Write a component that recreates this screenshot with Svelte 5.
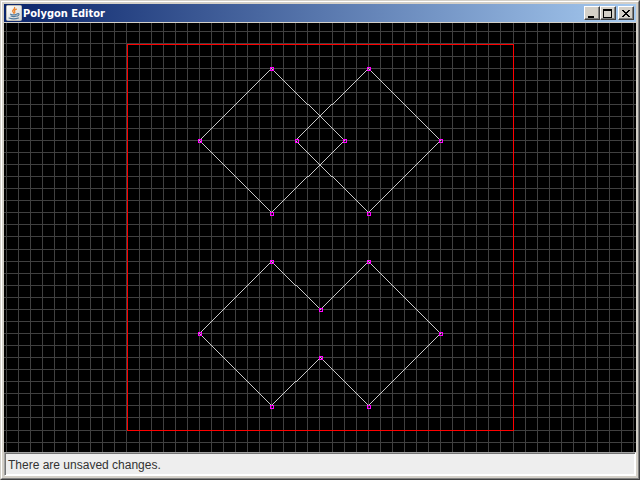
<script>
  /**
   * Polygon editor window: title bar, drawing canvas with a grid,
   * and a status bar along the bottom.
   */
  const CELL = 12.063;
  const bounds = { x: 123, y: 21, size: 386 };

  const polygons = [
    [[267, 45], [340, 117], [267, 189], [195, 117]],
    [[364, 45], [436, 117], [364, 189], [291, 117]],
    [[267, 238], [316, 286], [364, 238], [436, 310], [364, 382], [316, 334], [267, 382], [195, 310]]
  ];

  const handles = [
    [267, 45], [340, 117], [267, 190], [195, 117],
    [364, 45], [436, 117], [364, 190], [292, 117],
    [267, 238], [316, 286], [364, 238], [436, 310],
    [364, 383], [316, 334], [267, 383], [195, 310]
  ];

  let width = $state(632);
  let height = $state(429);

  // Grid lines round down, just short of the bounds
  function gridLines(origin, length) {
    const start = origin - 0.01;
    const lines = [];
    for (let k = -Math.floor(start / CELL); start + k * CELL < length; k++) {
      lines.push(Math.floor(start + k * CELL));
    }
    return lines;
  }

  let columns = $derived(gridLines(bounds.x, width));
  let rows = $derived(gridLines(bounds.y, height));

  // One square per step, so edges stay hard and one pixel wide
  function edgePath([x0, y0], [x1, y1]) {
    const steps = Math.max(Math.abs(x1 - x0), Math.abs(y1 - y0));
    let d = '';
    for (let i = 0; i <= steps; i++) {
      const x = Math.round(x0 + ((x1 - x0) * i) / steps);
      const y = Math.round(y0 + ((y1 - y0) * i) / steps);
      d += `M${x} ${y}h1v1h-1z`;
    }
    return d;
  }

  function outline(polygon) {
    return polygon.map((p, i) => edgePath(p, polygon[(i + 1) % polygon.length])).join('');
  }
</script>

<div class="window">
  <div class="frame">
    <header class="titlebar">
      <svg class="logo" viewBox="0 0 16 16" aria-hidden="true">
        <defs>
          <linearGradient id="tile" x1="0" y1="0" x2="1" y2="1">
            <stop offset="0" stop-color="#fff" />
            <stop offset="1" stop-color="#d5d5d2" />
          </linearGradient>
        </defs>
        <rect x="0.5" y="0.5" width="15" height="15" rx="1" fill="url(#tile)" stroke="#bdbbb4" />
        <g fill="none" stroke-linecap="round">
          <path d="M8.6 2.5c.8 1.800-2.400 2.300-1.900 3.900.2.700.9.900 1 1.700M10.400 4.200C8.500 5 8 5.700 8.700 6.600c.4.600.2 1-.3 1.500" stroke="#ed852f" stroke-width="1.300" />
          <path d="M4.500 9.200c1.500.7 4.500.7 6 0M5 11c1.500.6 3.800.6 5.200 0M3 13c2.500.9 7 .9 9.500 0M11.300 8.800c2.500-.6 2.200 1.800-.3 2.300" stroke="#527a9c" stroke-width="1.200" />
        </g>
      </svg>
      <h1>Polygon Editor</h1>
      <div class="controls">
        <button type="button" aria-label="Minimize">
          <svg viewBox="0 0 12 10"><path d="M3 8h6v2H3z" /></svg>
        </button>
        <button type="button" aria-label="Maximize">
          <svg viewBox="0 0 12 10"><path d="M2 1h9v9H2zM3 3v6h7V3z" fill-rule="evenodd" /></svg>
        </button>
        <button type="button" class="close" aria-label="Close">
          <svg viewBox="0 0 12 10">
            <path d="M3 2h2v1h1v1h2V3h1V2h2v1h-1v1H9v1H8v1h1v1h1v1h1v1H9V8H8V7H6v1H5v1H3V8h1V7h1V6h1V5H5V4H4V3H3z" />
          </svg>
        </button>
      </div>
    </header>

    <main class="canvas" bind:clientWidth={width} bind:clientHeight={height}>
      <svg class="drawing" role="img" aria-label="Polygon canvas">
        <g class="grid">
          {#each columns as x (x)}
            <rect {x} y="0" width="1" height="100%" />
          {/each}
          {#each rows as y (y)}
            <rect x="0" {y} width="100%" height="1" />
          {/each}
        </g>
        <rect class="bounds" x={bounds.x + 0.5} y={bounds.y + 0.5} width={bounds.size} height={bounds.size} />
        {#each polygons as polygon}
          <path class="outline" d={outline(polygon)} />
        {/each}
        {#each handles as [x, y]}
          <rect class="handle" x={x - 0.5} y={y - 0.5} width="3" height="3" />
        {/each}
      </svg>
    </main>

    <footer class="status" role="status">There are unsaved changes.</footer>
  </div>
</div>

<style>
  :global(body) {
    margin: 0;
  }

  .window {
    box-sizing: border-box;
    height: 100vh;
    border: 1px solid;
    border-color: #d4d0c8 #404040 #404040 #d4d0c8;
    background: #d4d0c8;
  }

  .frame {
    box-sizing: border-box;
    height: 100%;
    display: flex;
    flex-direction: column;
    padding: 2px;
    border: 1px solid;
    border-color: #fff #808080 #808080 #fff;
  }

  .titlebar {
    display: flex;
    align-items: center;
    height: 18px;
    margin-bottom: 1px;
    padding: 0 2px;
    background: linear-gradient(to right, #0a246a, #a6caf0);
  }

  .logo {
    width: 16px;
    height: 16px;
  }

  h1 {
    flex: 1;
    margin: 0;
    padding: 2px 0 0 1px;
    font: bold 11px/16px "DejaVu Sans Condensed", "DejaVu Sans", sans-serif;
    color: #fff;
  }

  .controls {
    display: flex;
  }

  button {
    box-sizing: border-box;
    width: 16px;
    height: 14px;
    padding: 0;
    border: 1px solid;
    border-color: #fff #404040 #404040 #fff;
    background: #d4d0c8;
    box-shadow: inset -1px -1px #808080;
  }

  button svg {
    display: block;
    width: 12px;
    height: 10px;
    shape-rendering: crispEdges;
  }

  .close {
    margin-left: 2px;
  }

  .canvas {
    flex: 1;
    min-height: 0;
    overflow: hidden;
    background: #000;
  }

  .drawing {
    display: block;
    width: 100%;
    height: 100%;
    shape-rendering: crispEdges;
  }

  .grid {
    fill: #404040;
  }

  .bounds {
    fill: none;
    stroke: #f00;
  }

  .outline {
    fill: #c8c8c8;
  }

  .handle {
    fill: none;
    stroke: #f0f;
  }

  .status {
    box-sizing: border-box;
    height: 24px;
    padding: 1px 3px 0;
    border: 1px solid;
    border-color: #a3a3a3 #fff #fff #a3a3a3;
    box-shadow: inset 1px 1px #737373, inset -1px -1px #fff;
    background: #eee;
    font: 12px/22px "Liberation Sans", Arial, sans-serif;
    color: #333;
  }
</style>
